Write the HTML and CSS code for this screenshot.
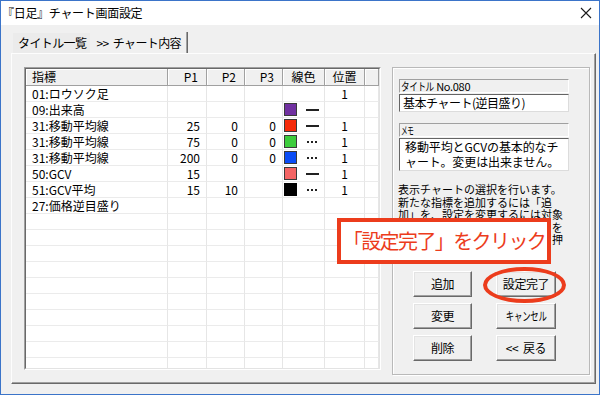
FILE: index.html
```html
<!DOCTYPE html>
<html lang="ja">
<head>
<meta charset="utf-8">
<title>チャート画面設定</title>
<link rel="stylesheet" href="styles.css">
</head>
<body>
<div class="window">
  <div class="titlebar">
    <span class="title">『日足』チャート画面設定</span>
    <svg class="close" width="12" height="12" viewBox="0 0 12 12"><path d="M1 1L11 11M11 1L1 11" stroke="#1a1a1a" stroke-width="1.1" fill="none"/></svg>
  </div>
  <div class="body">
    <div class="tabs">
      <div class="tab">タイトル一覧</div>
      <div class="tab active">&gt;&gt;&nbsp; チャート内容</div>
    </div>
    <div class="panel">
      <div class="gridbox">
        <div class="gridinner">
          <div class="row head">
            <div class="c name">指標</div>
            <div class="c num">P1</div>
            <div class="c num">P2</div>
            <div class="c num">P3</div>
            <div class="c mid">線色</div>
            <div class="c mid">位置</div>
            <div class="c"></div>
          </div>
          <div class="row">
            <div class="c name">01:ロウソク足</div>
            <div class="c num"></div><div class="c num"></div><div class="c num"></div>
            <div class="c color"></div>
            <div class="c mid">1</div><div class="c"></div>
          </div>
          <div class="row">
            <div class="c name">09:出来高</div>
            <div class="c num"></div><div class="c num"></div><div class="c num"></div>
            <div class="c color"><span class="sw purple"></span><span class="ln solid"></span></div>
            <div class="c mid"></div><div class="c"></div>
          </div>
          <div class="row">
            <div class="c name">31:移動平均線</div>
            <div class="c num">25</div><div class="c num">0</div><div class="c num">0</div>
            <div class="c color"><span class="sw red"></span><span class="ln solid"></span></div>
            <div class="c mid">1</div><div class="c"></div>
          </div>
          <div class="row">
            <div class="c name">31:移動平均線</div>
            <div class="c num">75</div><div class="c num">0</div><div class="c num">0</div>
            <div class="c color"><span class="sw green"></span><span class="ln dot"></span></div>
            <div class="c mid">1</div><div class="c"></div>
          </div>
          <div class="row">
            <div class="c name">31:移動平均線</div>
            <div class="c num">200</div><div class="c num">0</div><div class="c num">0</div>
            <div class="c color"><span class="sw blue"></span><span class="ln dot"></span></div>
            <div class="c mid">1</div><div class="c"></div>
          </div>
          <div class="row">
            <div class="c name">50:GCV</div>
            <div class="c num">15</div><div class="c num"></div><div class="c num"></div>
            <div class="c color"><span class="sw pink"></span><span class="ln solid"></span></div>
            <div class="c mid">1</div><div class="c"></div>
          </div>
          <div class="row">
            <div class="c name">51:GCV平均</div>
            <div class="c num">15</div><div class="c num">10</div><div class="c num"></div>
            <div class="c color"><span class="sw black"></span><span class="ln dot"></span></div>
            <div class="c mid">1</div><div class="c"></div>
          </div>
          <div class="row">
            <div class="c name">27:価格逆目盛り</div>
            <div class="c num"></div><div class="c num"></div><div class="c num"></div>
            <div class="c color"></div>
            <div class="c mid"></div><div class="c"></div>
          </div>
          <div class="row"><div class="c"></div><div class="c"></div><div class="c"></div><div class="c"></div><div class="c"></div><div class="c"></div><div class="c"></div></div>
          <div class="row"><div class="c"></div><div class="c"></div><div class="c"></div><div class="c"></div><div class="c"></div><div class="c"></div><div class="c"></div></div>
          <div class="row"><div class="c"></div><div class="c"></div><div class="c"></div><div class="c"></div><div class="c"></div><div class="c"></div><div class="c"></div></div>
          <div class="row"><div class="c"></div><div class="c"></div><div class="c"></div><div class="c"></div><div class="c"></div><div class="c"></div><div class="c"></div></div>
          <div class="row"><div class="c"></div><div class="c"></div><div class="c"></div><div class="c"></div><div class="c"></div><div class="c"></div><div class="c"></div></div>
          <div class="row"><div class="c"></div><div class="c"></div><div class="c"></div><div class="c"></div><div class="c"></div><div class="c"></div><div class="c"></div></div>
          <div class="row"><div class="c"></div><div class="c"></div><div class="c"></div><div class="c"></div><div class="c"></div><div class="c"></div><div class="c"></div></div>
          <div class="row"><div class="c"></div><div class="c"></div><div class="c"></div><div class="c"></div><div class="c"></div><div class="c"></div><div class="c"></div></div>
          <div class="row"><div class="c"></div><div class="c"></div><div class="c"></div><div class="c"></div><div class="c"></div><div class="c"></div><div class="c"></div></div>
          <div class="row"><div class="c"></div><div class="c"></div><div class="c"></div><div class="c"></div><div class="c"></div><div class="c"></div><div class="c"></div></div>
        </div>
      </div>
      <div class="group">
        <div class="lbl"><span class="narrow">タイトル</span> No.080</div>
        <div class="field">基本チャート(逆目盛り)</div>
        <div class="lbl lbl2"><span class="narrow">メモ</span></div>
        <div class="memo">移動平均とGCVの基本的なチ<br>ャート。変更は出来ません。</div>
        <div class="desc">表示チャートの選択を行います。<br>新たな指標を追加するには「追<br>加」を、設定を変更するには対象<br>の指標を選択してから「変更」を<br>削除するには「削除」ボタンを押<br>して下さい。</div>
        <div class="buttons">
          <div class="btn">追加</div>
          <div class="btn">設定完了</div>
          <div class="btn">変更</div>
          <div class="btn"><span class="narrow2">キャンセル</span></div>
          <div class="btn">削除</div>
          <div class="btn">&lt;&lt;&nbsp; 戻る</div>
        </div>
      </div>
      <div class="callout">「設定完了」をクリック</div>
      <div class="ring"></div>
    </div>
  </div>
</div>
</body>
</html>
```
FILE: styles.css
```css
* { box-sizing: border-box; }
html, body { margin: 0; padding: 0; }
body {
  width: 600px;
  height: 395px;
  overflow: hidden;
  font-family: "Noto Sans CJK JP", "Noto Sans", sans-serif;
  color: #000;
  background: #fff;
}
.window {
  width: 600px;
  height: 395px;
  border: 1px solid #3b74c9;
  background: #f0f0f0;
  display: flex;
  flex-direction: column;
}
.titlebar {
  height: 24px;
  background: #fff;
  display: flex;
  align-items: center;
  justify-content: space-between;
  padding-left: 1px;
  padding-right: 7px;
}
.title {
  font-size: 12px;
  line-height: 24px;
  letter-spacing: -0.3px;
}
.close { display: block; }
.body {
  padding: 7px 3px 0 10px;
}
.tabs {
  height: 21px;
  display: flex;
  align-items: flex-start;
  padding-left: 2px;
}
.tab {
  font-size: 12px;
  line-height: 20px;
  height: 20px;
  margin-top: 1px;
  padding: 0 4px 0 5px;
  background: #ebebeb;
  letter-spacing: -0.6px;
}
.tab.active {
  margin-top: 0;
  height: 21px;
  line-height: 22px;
  background: #f0f0f0;
  padding: 0 6px 0 6px;
  border-right: 1px solid #696969;
  box-shadow: inset -1px 0 0 #a0a0a0;
  position: relative;
  z-index: 1;
}
.panel {
  position: relative;
  height: 331px;
  border: 1px solid;
  border-color: #fdfdfd #696969 #696969 #fdfdfd;
  box-shadow: inset -1px -1px 0 #a0a0a0;
  padding: 13px 4px 0 12px;
  display: flex;
  gap: 11px;
  align-items: flex-start;
}
.gridbox {
  width: 357px;
  height: 303px;
  border: 1px solid;
  border-color: #a0a0a0 #ffffff #ffffff #a0a0a0;
}
.gridinner {
  width: 100%;
  height: 100%;
  border: 1px solid;
  border-color: #696969 #e3e3e3 #e3e3e3 #696969;
  background: #fff;
  overflow: hidden;
}
.row {
  display: grid;
  grid-template-columns: 142px 39px 38px 38px 42px 40px 14px;
  height: 16px;
}
.row.head {
  height: 17px;
}
.c {
  font-size: 12px;
  line-height: 15px;
  border-right: 1px solid #e6e6e6;
  border-bottom: 1px solid #ebebeb;
  white-space: nowrap;
  overflow: hidden;
}
.head .c {
  background: #f0f0f0;
  border-right: 1px solid #a0a0a0;
  border-bottom: 1px solid #a0a0a0;
  box-shadow: inset 1px 1px 0 #fff;
  line-height: 16px;
}
.name { padding-left: 6px; }
.num { text-align: right; padding-right: 6px; }
.head .num { padding-right: 8px; }
.mid { text-align: center; }
.color {
  display: flex;
  align-items: center;
  padding-left: 1px;
}
.sw {
  width: 13px;
  height: 13px;
  border: 1px solid #3a3a3a;
  flex: none;
}
.purple { background: #7030a0; }
.red { background: #f52a0a; }
.green { background: #3ccc3c; }
.blue { background: #0a4cf5; }
.pink { background: #f46464; }
.black { background: #000; border-color: #000; }
.ln {
  width: 13px;
  height: 2px;
  margin-left: 9px;
  flex: none;
}
.ln.solid { background: #222; }
.ln.dot {
  background: repeating-linear-gradient(90deg, #222 0, #222 2px, transparent 2px, transparent 4px);
  width: 11px;
  margin-left: 10px;
}
.group {
  width: 198px;
  height: 308px;
  border: 1px solid #b9b9b9;
  box-shadow: inset 1px 1px 0 #fff, 1px 1px 0 #fff;
  padding: 11px 0 0 6px;
}
.lbl {
  width: 170px;
  height: 14px;
  border: 1px solid;
  border-color: #a0a0a0 #fff #fff #a0a0a0;
  font-size: 11px;
  line-height: 12px;
  padding-left: 1px;
  letter-spacing: -0.3px;
  white-space: nowrap;
}
.narrow {
  display: inline-block;
  transform: scaleX(0.78);
  transform-origin: left center;
  margin-right: -9px;
  letter-spacing: -0.5px;
}
.lbl2 .narrow {
  transform: scaleX(0.6);
}
.lbl2 { margin-top: 11px; }
.field {
  width: 170px;
  height: 18px;
  margin-top: 1px;
  background: #fff;
  border: 1px solid;
  border-color: #646464 #dcdcdc #dcdcdc #646464;
  font-size: 12px;
  line-height: 16px;
  padding-left: 3px;
  letter-spacing: -0.5px;
  white-space: nowrap;
}
.memo {
  width: 170px;
  height: 33px;
  margin-top: 1px;
  background: #fff;
  border: 1px solid;
  border-color: #646464 #dcdcdc #dcdcdc #646464;
  font-size: 12px;
  line-height: 15px;
  padding: 0 0 0 5px;
  white-space: nowrap;
  letter-spacing: -0.1px;
}
.desc {
  margin-top: 12px;
  margin-left: -1px;
  font-size: 11px;
  line-height: 12.5px;
  white-space: nowrap;
}
.buttons {
  margin-top: 13px;
  margin-left: 14px;
  display: grid;
  grid-template-columns: 59px 60px;
  grid-auto-rows: 26px;
  column-gap: 24px;
  row-gap: 6px;
}
.btn {
  background: #f0f0f0;
  border: 1px solid;
  border-color: #fff #696969 #696969 #fff;
  box-shadow: inset -1px -1px 0 #a0a0a0, inset 1px 1px 0 #e3e3e3;
  font-size: 12px;
  line-height: 24px;
  text-align: center;
  letter-spacing: -0.4px;
  white-space: nowrap;
  overflow: hidden;
}
.narrow2 {
  display: inline-block;
  transform: scaleX(0.7);
  letter-spacing: -0.3px;
}
.callout {
  position: absolute;
  left: 325px;
  top: 164px;
  width: 214px;
  height: 46px;
  background: #fff;
  border: 4px solid #ec3c1c;
  color: #ec3c1c;
  font-size: 20px;
  line-height: 37px;
  text-align: center;
  letter-spacing: -1.6px;
  white-space: nowrap;
}
.ring {
  position: absolute;
  left: 471px;
  top: 213px;
  width: 83px;
  height: 36px;
  border: 4px solid #ec3c1c;
  border-radius: 50%;
}
```
